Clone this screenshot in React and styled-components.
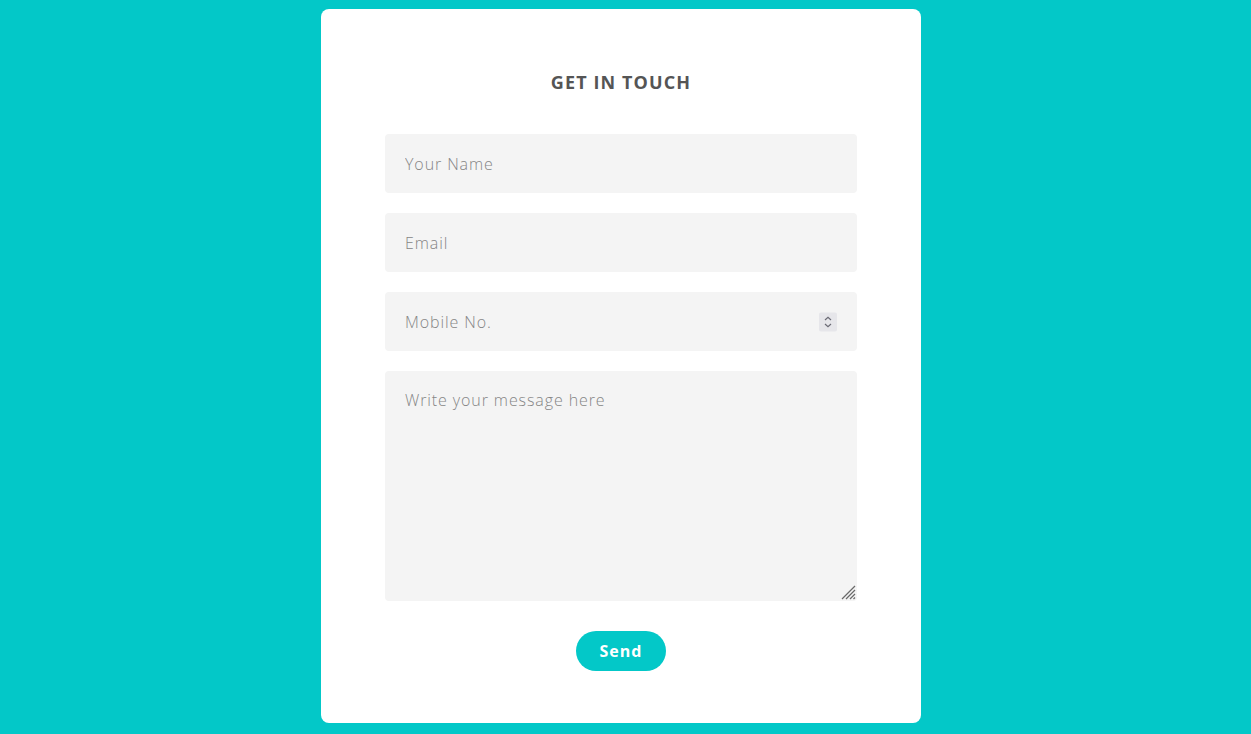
import React from "react";
import styled, { createGlobalStyle } from "styled-components";

const Global = createGlobalStyle`
  html, body { margin: 0; padding: 0; background: #03c8c8; }
  body { font-family: "Open Sans", "Liberation Sans", sans-serif; }
  * { box-sizing: border-box; }
`;

const Page = styled.div`
  min-height: 734px;
  display: flex;
  justify-content: center;
  align-items: flex-start;
  padding: 9px 9px 0 0;
`;

const Card = styled.form`
  width: 600px;
  height: 714px;
  background: #ffffff;
  border-radius: 8px;
  padding: 55px 64px 52px;
  display: flex;
  flex-direction: column;
  align-items: stretch;
`;

const Title = styled.h2`
  margin: 0 0 34px;
  text-align: center;
  font-size: 18px;
  line-height: 36px;
  font-weight: 700;
  color: #555555;
  letter-spacing: 1.1px;
  flex-shrink: 0;
`;

const Fields = styled.div`
  display: flex;
  flex-direction: column;
  gap: 20px;
  flex-shrink: 0;
`;

const FieldWrap = styled.div`
  position: relative;
`;

const Input = styled.input`
  width: 100%;
  height: 59px;
  border: none;
  outline: none;
  border-radius: 4px;
  background: #f4f4f4;
  padding: 0 20px;
  font-family: inherit;
  font-size: 16px;
  font-weight: 300;
  color: #444;
  letter-spacing: 0.9px;
  display: block;
  &::placeholder { color: #858585; }
`;

const Spinner = styled.div`
  position: absolute;
  right: 20px;
  top: 50%;
  transform: translateY(-50%);
  width: 18px;
  height: 19px;
  background: #e6e6ea;
  border-radius: 2px;
  display: flex;
  align-items: center;
  justify-content: center;
`;

const TextArea = styled.textarea`
  width: 100%;
  height: 230px;
  border: none;
  outline: none;
  border-radius: 4px;
  background: #f4f4f4;
  padding: 18px 20px;
  font-family: inherit;
  font-size: 16px;
  font-weight: 300;
  color: #444;
  letter-spacing: 0.9px;
  resize: none;
  display: block;
  &::placeholder { color: #858585; }
`;

const Grip = styled.svg`
  position: absolute;
  right: 1px;
  bottom: 1px;
  pointer-events: none;
`;

const Button = styled.button`
  align-self: center;
  flex-shrink: 0;
  margin-top: 30px;
  width: 90px;
  height: 40px;
  border: none;
  border-radius: 20px;
  background: #03c8c8;
  color: #ffffff;
  font-family: inherit;
  font-size: 16px;
  font-weight: 700;
  letter-spacing: 1px;
  cursor: pointer;
`;

export default function App() {
  return (
    <>
      <Global />
      <Page>
        <Card onSubmit={(e) => e.preventDefault()}>
          <Title>GET IN TOUCH</Title>
          <Fields>
            <Input type="text" placeholder="Your Name" />
            <Input type="email" placeholder="Email" />
            <FieldWrap>
              <Input type="text" inputMode="numeric" placeholder="Mobile No." />
              <Spinner>
                <svg width="10" height="13" viewBox="0 0 10 13" fill="none" stroke="#6b6b75" strokeWidth="1.2">
                  <path d="M2 4.5 L5 1.8 L8 4.5" />
                  <path d="M2 8.5 L5 11.2 L8 8.5" />
                </svg>
              </Spinner>
            </FieldWrap>
            <FieldWrap>
              <TextArea placeholder="Write your message here" />
              <Grip width="15" height="15" viewBox="0 0 15 15" stroke="#6a6a6a" strokeWidth="1.3">
                <path d="M1 14 L14 1" />
                <path d="M5 14 L14 5" />
                <path d="M9 14 L14 9" />
                <path d="M12.5 14 L14 12.5" />
              </Grip>
            </FieldWrap>
          </Fields>
          <Button type="submit">Send</Button>
        </Card>
      </Page>
    </>
  );
}
